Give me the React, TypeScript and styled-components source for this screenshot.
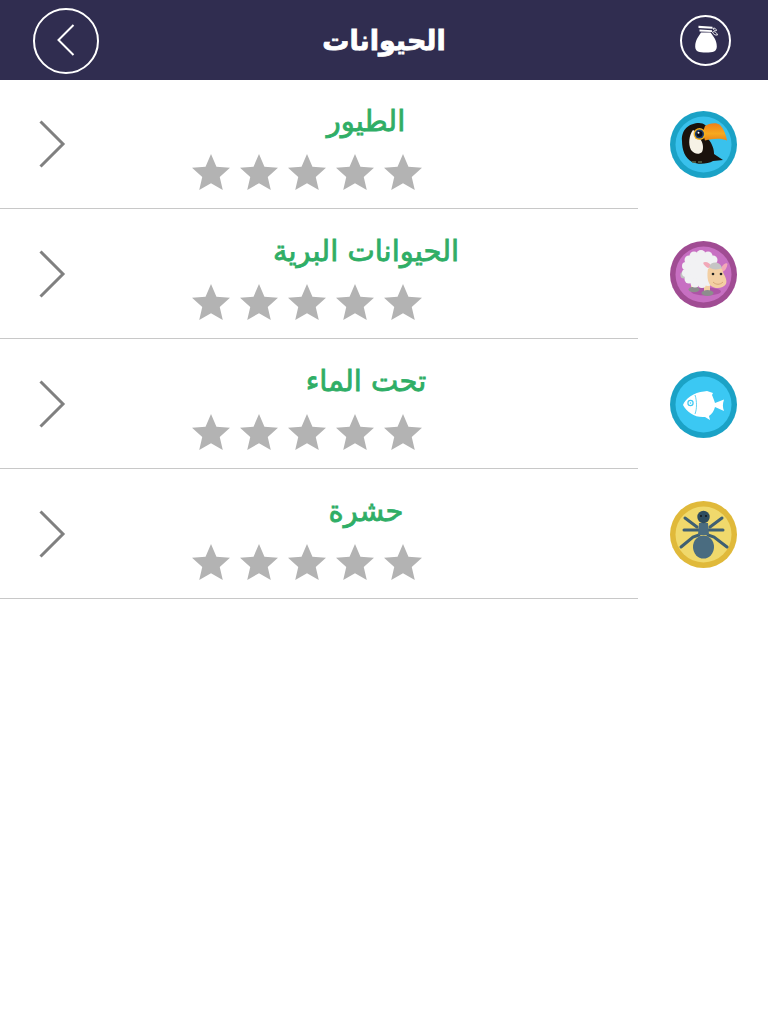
import React from 'react';
import styled, { createGlobalStyle } from 'styled-components';

const GlobalStyle = createGlobalStyle`
  html, body {
    margin: 0;
    padding: 0;
    background: #fff;
    font-family: "DejaVu Sans", "Noto Sans", sans-serif;
  }
`;

const Page = styled.div`
  min-height: 100vh;
  background: #fff;
`;

// Header
const Header = styled.header`
  height: 80px;
  background: #302d50;
  display: grid;
  grid-template-columns: 1fr auto 1fr;
  align-items: center;
  position: relative;
  z-index: 1;
`;

const BackButton = styled.button`
  width: 66px;
  height: 66px;
  margin-left: 33px;
  margin-top: 1px;
  padding: 0;
  background: none;
  border: 2px solid #fff;
  border-radius: 50%;
  box-sizing: border-box;
  display: flex;
  align-items: center;
  justify-content: center;
  justify-self: start;
`;

const BagButton = styled.button`
  width: 51px;
  height: 51px;
  margin-right: 37px;
  padding: 0;
  background: none;
  border: 2px solid #fff;
  border-radius: 50%;
  box-sizing: border-box;
  display: flex;
  align-items: center;
  justify-content: center;
  justify-self: end;
`;

const Title = styled.h1`
  margin: 0;
  color: #fff;
  font-size: 27px;
  font-weight: 700;
  line-height: 1;
  -webkit-text-stroke: 0.8px #fff;
`;

// List
const List = styled.div`
  margin-top: -1px;
`;

const Row = styled.div`
  height: 130px;
  display: flex;
`;

const Content = styled.div`
  width: 638px;
  box-sizing: border-box;
  border-bottom: 1px solid #c8c8c8;
  display: flex;
  align-items: center;
`;

const ChevronSlot = styled.div`
  width: 94px;
  padding-left: 39px;
  box-sizing: border-box;
  display: flex;
  align-items: center;
`;

const Details = styled.div`
  flex: 1;
  align-self: stretch;
  display: flex;
  flex-direction: column;
  padding-top: 25px;
`;

const Name = styled.div`
  height: 36px;
  text-align: center;
  color: #2fae66;
  font-size: 29px;
  line-height: 35px;
  -webkit-text-stroke: 0.8px #2fae66;
`;

const Stars = styled.div`
  margin-top: 14px;
  padding-left: 98px;
  display: flex;
  gap: 10px;
`;

const IconSlot = styled.div`
  flex: 1;
  display: flex;
  align-items: center;
  justify-content: center;
  padding-top: 1px;
`;

const Star = () => (
  <svg width="38" height="36" viewBox="0 0 39 37">
    <polygon
      fill="#b3b3b3"
      points="19.5,0 25.1,13 39,14.2 28.5,23.6 31.6,37 19.5,30 7.4,37 10.5,23.6 0,14.2 13.9,13"
    />
  </svg>
);

const RowChevron = () => (
  <svg width="27" height="48" viewBox="0 0 27 48">
    <path d="M1.5 1.5 L24 24 L1.5 46.5" fill="none" stroke="#808080" strokeWidth="3" />
  </svg>
);

const BackChevron = () => (
  <svg width="18" height="32" viewBox="0 0 18 32" style={{ marginTop: -2 }}>
    <path d="M16.5 1 L1.5 16 L16.5 31" fill="none" stroke="#fff" strokeWidth="2" />
  </svg>
);

const BagIcon = () => (
  <svg width="26" height="30" viewBox="0 0 26 30">
    <path d="M5.5 0.8 L19.5 1.8 L19.5 3.8 L5.5 3 Z M6.5 4.6 L19 5.2 L19 7 L6.5 6.6 Z" fill="#fff" />
    <path
      d="M8 7.6 H17.5 C20 11 23.8 15 23.8 21.5 C23.8 26.5 20 27.6 13 27.6 C6 27.6 2.2 26.5 2.2 21.5 C2.2 15 6 11 8 7.6 Z"
      fill="#fff"
    />
    <path
      d="M20 3.5 C21.5 2.5 23 3.5 23.5 5.5 C22 6 20.5 5 20 3.5 Z M19.5 7 C21 6 23.5 7 24.5 10 C22 10.5 20 9 19.5 7 Z"
      fill="none"
      stroke="#fff"
      strokeWidth="0.9"
    />
  </svg>
);

const ToucanIcon = () => (
  <svg width="67" height="67" viewBox="0 0 67 67">
    <defs>
      <linearGradient id="beak" x1="0" y1="0" x2="0" y2="1">
        <stop offset="0" stopColor="#ef7f1a" />
        <stop offset="0.6" stopColor="#f6a91f" />
        <stop offset="1" stopColor="#e8861a" />
      </linearGradient>
    </defs>
    <circle cx="33.5" cy="33.5" r="33.5" fill="#1ba2c6" />
    <circle cx="33.5" cy="33.5" r="28" fill="#39c1ec" />
    <path
      d="M12 30 C11 18 20 12 29 12 C34 12 38 15 38 20 L38 28 C42 32 44 38 44 43 L53 49 L43 50 C38 53 28 54 22 51 C15 47 12 39 12 30 Z"
      fill="#1a120c"
    />
    <path
      d="M23 19 C19 24 18 33 21 39 C24 43 29 44 32 41 C34 37 33 31 30 28 C27 26 25 22 25 20 Z"
      fill="#f6f2e6"
    />
    <path
      d="M35 15 C39 12 47 11 50 14 C54 18 56 24 57 29.5 C50 26.5 42 28 35 29.5 C33 25 33 19 35 15 Z"
      fill="url(#beak)"
    />
    <circle cx="29.5" cy="23" r="6" fill="#f3b01f" />
    <circle cx="29.5" cy="23" r="4.6" fill="#1d3f70" />
    <circle cx="29.5" cy="23" r="3" fill="#0b0b14" />
    <circle cx="28.5" cy="21.8" r="1" fill="#fff" />
    <path d="M22 51 h4 M28 51 h4" stroke="#5a6a4a" strokeWidth="1.6" />
  </svg>
);

const woolPuffs: [number, number, number][] = [
  [24, 15, 4.5], [31, 13.5, 4.5], [38, 15, 4.5], [43, 19, 4.5], [19, 19, 4.5],
  [16, 25, 4], [16, 32, 4], [19, 38, 4.5], [25, 42, 4.5], [32, 43, 4],
  [38, 41, 4], [44, 26, 4],
];

const SheepIcon = () => (
  <svg width="67" height="67" viewBox="0 0 67 67">
    <circle cx="33.5" cy="33.5" r="33.5" fill="#a04c93" />
    <circle cx="33.5" cy="33.5" r="28" fill="#c76fc2" />
    <ellipse cx="36" cy="50.5" rx="15" ry="4" fill="#ad55a6" />
    <rect x="21" y="40" width="6" height="8" fill="#f3cfa3" />
    <rect x="34" y="42" width="6" height="9" fill="#f3cfa3" />
    <ellipse cx="24" cy="48.5" rx="5.5" ry="2.8" fill="#8d8d8d" />
    <ellipse cx="37.5" cy="52" rx="6" ry="3" fill="#8d8d8d" />
    <circle cx="14" cy="34" r="3.6" fill="#c2c2c2" />
    <ellipse cx="30" cy="28" rx="15" ry="16" fill="#f1f1f3" />
    {woolPuffs.map(([cx, cy, r]) => (
      <circle key={`${cx}-${cy}`} cx={cx} cy={cy} r={r} fill="#f1f1f3" />
    ))}
    <path d="M38 27 C33 24 32 21 35 21 C38 21 41 23 42 26 Z" fill="#f2a8b8" />
    <path d="M51 27 C53 23 57 21 57.5 23 C57 27 55 30 52 31 Z" fill="#f2a8b8" />
    <path
      d="M38 28 C42 24 49 24 52 28 C53 33 58 38 56 43 C53 48 45 48 41 45 C37 41 37 33 38 28 Z"
      fill="#f3cfa3"
    />
    <path d="M39 26 C41 20 50 20 52 27 C48 29 42 29 39 26 Z" fill="#c5c5c5" />
    <circle cx="43" cy="33" r="1.3" fill="#222" />
    <circle cx="51" cy="33" r="1.3" fill="#222" />
    <path d="M43 41 C46 44 50 44 53 41" stroke="#d8a878" strokeWidth="1" fill="none" />
  </svg>
);

const FishIcon = () => (
  <svg width="67" height="67" viewBox="0 0 67 67">
    <circle cx="33.5" cy="33.5" r="33.5" fill="#1ba2c6" />
    <circle cx="33.5" cy="33.5" r="28" fill="#3bc8f3" />
    <path
      d="M13 34 C15 28 24 21 34 20.5 L37 20 L43 22 L42 24 C43 26 44 29 45 32 L54 28.5 C52.5 33 52.5 36 54 40 L45 36 C44 40 42 43 39 45 L40 49 L35 46 C25 47 17 41 13 34 Z"
      fill="#fff"
    />
    <circle cx="20.5" cy="32" r="2.6" fill="none" stroke="#3bc8f3" strokeWidth="1.2" />
    <circle cx="20.5" cy="32" r="0.8" fill="#3bc8f3" />
    <path d="M25 24 C27 30 27 38 25 43" fill="none" stroke="#3bc8f3" strokeWidth="0.8" />
  </svg>
);

const AntIcon = () => (
  <svg width="67" height="67" viewBox="0 0 67 67">
    <circle cx="33.5" cy="33.5" r="33.5" fill="#e0b93a" />
    <circle cx="33.5" cy="33.5" r="28" fill="#f0d96c" />
    <g fill="none" stroke="#3f6073" strokeWidth="3" strokeLinecap="round">
      <path d="M15 17 L27 26 M52 17 L40 26" />
      <path d="M14 29 L53 29" />
      <path d="M11 46 L23 36 L29 34 M38 34 L44 36 L57 46" />
    </g>
    <path d="M29 22 h9 l1 12 h-11 Z" fill="#4a6c80" />
    <ellipse cx="33.5" cy="46" rx="10.5" ry="11.5" fill="#4a6c80" />
    <circle cx="33.5" cy="16" r="6.2" fill="#2f4d5f" />
    <circle cx="31" cy="15" r="0.9" fill="#111" />
    <circle cx="36" cy="15" r="0.9" fill="#111" />
  </svg>
);

const categories = [
  { name: 'الطيور', icon: <ToucanIcon /> },
  { name: 'الحيوانات البرية', icon: <SheepIcon /> },
  { name: 'تحت الماء', icon: <FishIcon /> },
  { name: 'حشرة', icon: <AntIcon /> },
];

export default function App() {
  return (
    <Page>
      <GlobalStyle />
      <Header>
        <BackButton>
          <BackChevron />
        </BackButton>
        <Title>الحيوانات</Title>
        <BagButton>
          <BagIcon />
        </BagButton>
      </Header>
      <List>
        {categories.map((cat) => (
          <Row key={cat.name}>
            <Content>
              <ChevronSlot>
                <RowChevron />
              </ChevronSlot>
              <Details>
                <Name>{cat.name}</Name>
                <Stars>
                  {[0, 1, 2, 3, 4].map((i) => (
                    <Star key={i} />
                  ))}
                </Stars>
              </Details>
            </Content>
            <IconSlot>{cat.icon}</IconSlot>
          </Row>
        ))}
      </List>
    </Page>
  );
}
